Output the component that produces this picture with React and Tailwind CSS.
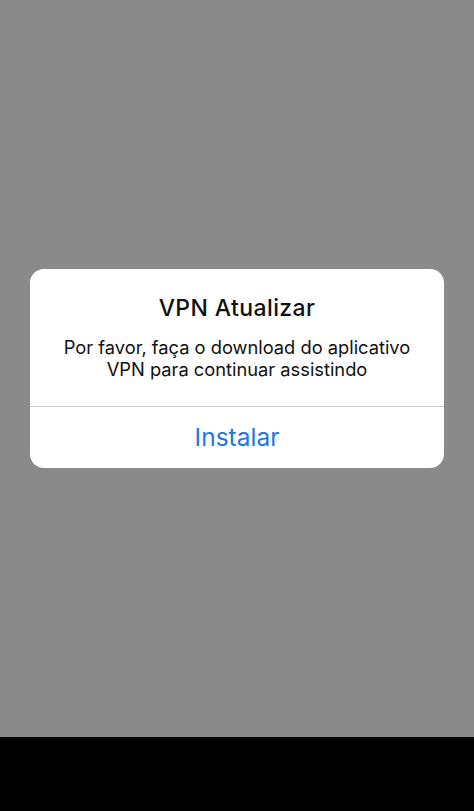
import * as React from "react";

function App() {
  return (
    <div className="flex flex-col w-[474px] h-[811px] bg-[#8a8a8a] font-['Inter','Liberation_Sans',sans-serif]">
      <div className="flex flex-col flex-1 items-center pt-[269px]">
        {/* alert box */}
        <div className="flex flex-col w-[414px] bg-white rounded-[14px] overflow-hidden">
          <div className="flex flex-col items-center px-2 pt-[26px] pb-[26px] text-center">
            <h1 className="text-[23px] leading-[27px] text-[#111] font-medium tracking-[0.4px]">
              VPN Atualizar
            </h1>
            <p className="mt-[14px] text-[18.3px] leading-[22px] text-[#111]">
              Por favor, faça o download do aplicativo
              <br />
              VPN para continuar assistindo
            </p>
          </div>
          <div className="h-px bg-[#cfcfcf]" />
          <button className="h-[61px] flex items-center justify-center text-[24.5px] text-[#1a7bd8]">
            Instalar
          </button>
        </div>
      </div>
      <div className="h-[74px] bg-black" />
    </div>
  );
}

export default App;
